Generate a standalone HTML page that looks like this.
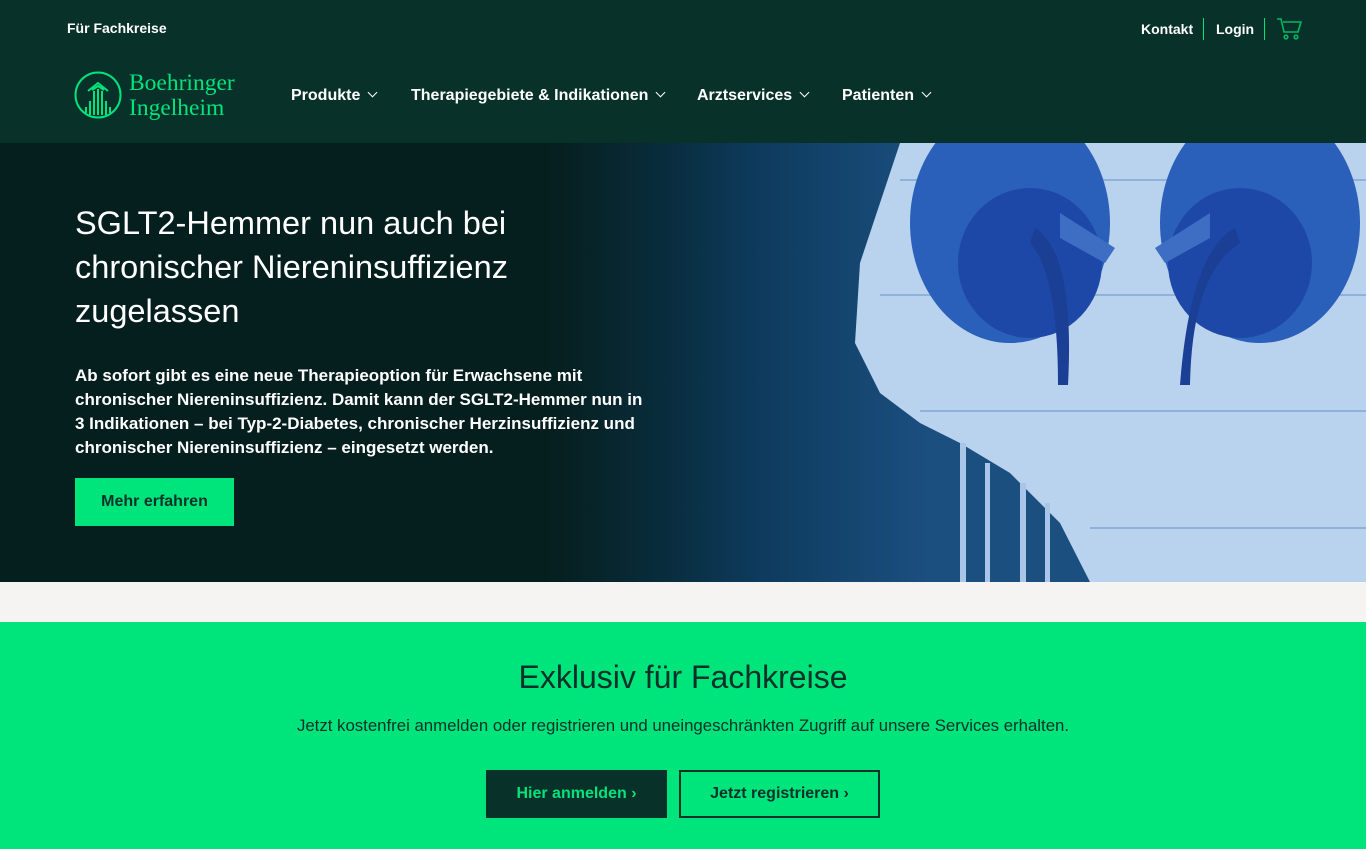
<!DOCTYPE html>
<html><head><meta charset="utf-8"><style>
*{margin:0;padding:0;box-sizing:border-box}
body{width:1366px;height:849px;overflow:hidden;font-family:"Liberation Sans",sans-serif;background:#f5f4f2}
.hdr{position:absolute;left:0;top:0;width:1366px;height:143px;background:#08312a;color:#fff}
.hero{position:absolute;left:0;top:143px;width:1366px;height:439px;background:#051f1e;overflow:hidden}
.green{position:absolute;left:0;top:622px;width:1366px;height:227px;background:#00e47c;text-align:center;color:#08312a}
.nav a{position:absolute;top:87px;font-size:16px;font-weight:bold;color:#fff}
.chev{display:inline-block;width:7px;height:7px;border-right:1.5px solid #fff;border-bottom:1.5px solid #fff;transform:rotate(45deg);margin-left:9px;position:relative;top:-4px}
</style></head><body>
<div class="hdr">
  <div style="position:absolute;left:67px;top:20px;font-size:14px;font-weight:bold">Für Fachkreise</div>
  <div style="position:absolute;left:1141px;top:21px;font-size:14px;font-weight:bold">Kontakt</div>
  <div style="position:absolute;left:1203px;top:18px;width:1px;height:22px;background:#00e47c"></div>
  <div style="position:absolute;left:1216px;top:21px;font-size:14px;font-weight:bold">Login</div>
  <div style="position:absolute;left:1264px;top:18px;width:1px;height:22px;background:#00e47c"></div>
  <svg style="position:absolute;left:1276px;top:17px" width="26" height="24" viewBox="0 0 26 24" fill="none" stroke="#00b864" stroke-width="1.6"><path d="M1 2h4l3 13h14l3-10H7"/><circle cx="10" cy="20" r="1.8"/><circle cx="20" cy="20" r="1.8"/></svg>
  <svg style="position:absolute;left:74px;top:71px" width="48" height="48" viewBox="0 0 48 48" fill="none" stroke="#00e47c" stroke-width="2"><circle cx="24" cy="24" r="22.5"/><path d="M14 20l10-8 10 8M18 19l6-4 6 4"/><path d="M20 44V20M24 44V18M28 44V20M16 44V30M32 44V30M12 42V36M36 42V36"/></svg>
  <div style="position:absolute;left:129px;top:71px;font-family:'Liberation Serif',serif;font-size:23.5px;line-height:25px;color:#00e47c">Boehringer<br>Ingelheim</div>
  <div class="nav">
    <a style="left:291px">Produkte<span class="chev"></span></a>
    <a style="left:411px">Therapiegebiete &amp; Indikationen<span class="chev"></span></a>
    <a style="left:697px">Arztservices<span class="chev"></span></a>
    <a style="left:842px">Patienten<span class="chev"></span></a>
  </div>
</div>
<div class="hero">
  <svg style="position:absolute;left:0;top:0" width="1366" height="439" viewBox="0 0 1366 439">
    <defs>
      <linearGradient id="g" x1="0" x2="1" y1="0" y2="0">
        <stop offset="0" stop-color="#051f1e"/><stop offset="0.4" stop-color="#051f1e"/>
        <stop offset="0.55" stop-color="#0d3a5c"/><stop offset="0.68" stop-color="#1b4f80"/><stop offset="1" stop-color="#1b4f80"/>
      </linearGradient>
      <linearGradient id="f" x1="0" x2="1"><stop offset="0" stop-color="#051f1e" stop-opacity="1"/><stop offset="1" stop-color="#051f1e" stop-opacity="0"/></linearGradient>
    </defs>
    <rect width="1366" height="439" fill="url(#g)"/>
    <path d="M900 0L880 60L860 120L855 200L880 250L920 280L960 300L1010 330L1060 380L1090 439H1366V0Z" fill="#b9d3ef"/>
    <g fill="#a9c6e8"><rect x="960" y="300" width="6" height="139"/><rect x="985" y="320" width="5" height="119"/><rect x="1020" y="340" width="6" height="99"/><rect x="1045" y="360" width="5" height="79"/></g>
    <g stroke="#8fb2da" stroke-width="2"><line x1="900" y1="37" x2="1366" y2="37"/><line x1="880" y1="152" x2="1366" y2="152"/><line x1="920" y1="268" x2="1366" y2="268"/><line x1="1090" y1="385" x2="1366" y2="385"/></g>
    <ellipse cx="1010" cy="80" rx="100" ry="120" fill="#2a5fba"/>
    <ellipse cx="1030" cy="120" rx="72" ry="75" fill="#1d48a8"/>
    <ellipse cx="1260" cy="80" rx="100" ry="120" fill="#2a5fba"/>
    <ellipse cx="1240" cy="120" rx="72" ry="75" fill="#1d48a8"/>
    <path d="M1060 70 L1115 105 L1105 120 L1060 95Z M1210 70 L1155 105 L1165 120 L1210 95Z" fill="#3d6ec4"/>
    <path d="M1035 85 Q1075 110 1068 242 L1058 242 Q1058 130 1030 100Z M1235 85 Q1190 110 1180 242 L1190 242 Q1192 130 1240 100Z" fill="#1a3f95"/>
    <rect x="0" y="0" width="760" height="439" fill="url(#f)"/>
  </svg>
  <h1 style="position:absolute;left:75px;top:58px;font-size:32.5px;line-height:44px;font-weight:normal;color:#fff;width:540px">SGLT2-Hemmer nun auch bei chronischer Niereninsuffizienz zugelassen</h1>
  <p style="position:absolute;left:75px;top:221px;font-size:17px;line-height:24px;font-weight:bold;color:#fff;width:578px">Ab sofort gibt es eine neue Therapieoption für Erwachsene mit chronischer Niereninsuffizienz. Damit kann der SGLT2-Hemmer nun in 3 Indikationen – bei Typ-2-Diabetes, chronischer Herzinsuffizienz und chronischer Niereninsuffizienz – eingesetzt werden.</p>
  <div style="position:absolute;left:75px;top:335px;width:159px;height:48px;background:#00e47c;color:#08312a;font-size:16px;font-weight:bold;line-height:48px;text-align:center">Mehr erfahren</div>
</div>
<div class="green">
  <div style="position:absolute;left:0;width:1366px;top:37px;font-size:32px">Exklusiv für Fachkreise</div>
  <div style="position:absolute;left:0;width:1366px;top:94px;font-size:16.8px">Jetzt kostenfrei anmelden oder registrieren und uneingeschränkten Zugriff auf unsere Services erhalten.</div>
  <div style="position:absolute;left:486px;top:148px;width:181px;height:48px;background:#08312a;color:#00e47c;font-size:16px;font-weight:bold;line-height:48px">Hier anmelden &#8250;</div>
  <div style="position:absolute;left:679px;top:148px;width:201px;height:48px;border:2px solid #08312a;color:#08312a;font-size:16px;font-weight:bold;line-height:44px">Jetzt registrieren &#8250;</div>
</div>
</body></html>
